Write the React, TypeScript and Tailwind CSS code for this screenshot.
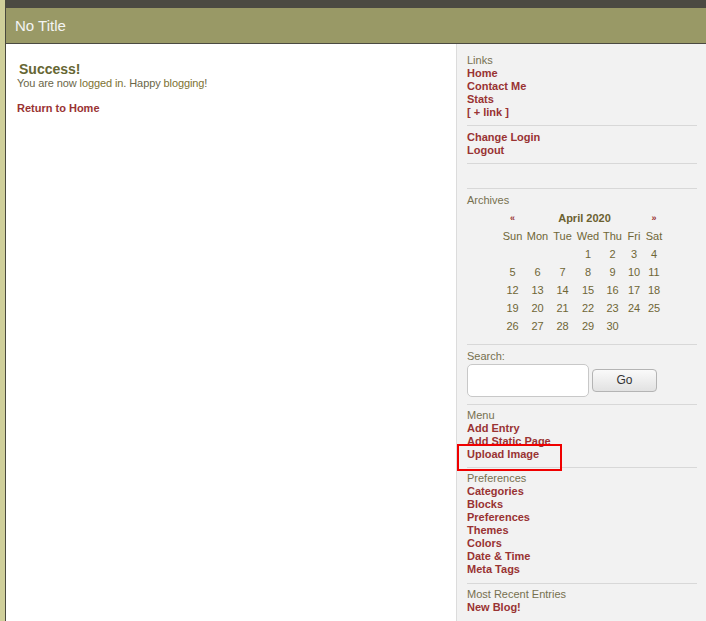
import React from "react";

const F = { fontFamily: '"Liberation Sans", Arial, sans-serif' };

function Hr({ mt = "mt-[6px]", mb = "mb-[4px]" }: { mt?: string; mb?: string }) {
  return <div className={`${mt} ${mb} h-px bg-[#d8d8d8]`} />;
}

function L({ children }: { children: React.ReactNode }) {
  return <div className="h-[13px] font-bold text-[#993333] whitespace-nowrap">{children}</div>;
}

function H({ children }: { children: React.ReactNode }) {
  return <div className="h-[13px] text-[#76704f] whitespace-nowrap">{children}</div>;
}

const cols = ["w-[25px]", "w-[25px]", "w-[25px]", "w-[26px]", "w-[23px]", "w-[20px]", "w-[20px]"];
const heads = ["Sun", "Mon", "Tue", "Wed", "Thu", "Fri", "Sat"];
const weeks: (number | null)[][] = [
  [null, null, null, 1, 2, 3, 4],
  [5, 6, 7, 8, 9, 10, 11],
  [12, 13, 14, 15, 16, 17, 18],
  [19, 20, 21, 22, 23, 24, 25],
  [26, 27, 28, 29, 30, null, null],
];

function Calendar() {
  return (
    <div className="flex justify-center mt-[2px]">
      <div className="flex flex-col text-[#6f6636]">
        <div className="flex h-[18px] items-center">
          <div className="w-[25px] text-center text-[#993333] font-bold text-[9px]">«</div>
          <div className="w-[119px] text-center font-bold text-[#6b6130]">April 2020</div>
          <div className="w-[20px] text-center text-[#993333] font-bold text-[9px]">»</div>
        </div>
        <div className="flex h-[18px] items-center">
          {heads.map((h, i) => (
            <div key={h} className={`${cols[i]} text-center`}>{h}</div>
          ))}
        </div>
        {weeks.map((w, wi) => (
          <div key={wi} className="flex h-[18px] items-center">
            {w.map((d, i) => (
              <div key={i} className={`${cols[i]} text-center`}>{d ?? ""}</div>
            ))}
          </div>
        ))}
      </div>
    </div>
  );
}

export default function App() {
  return (
    <div style={F} className="flex min-h-[621px] bg-[#cccc99]">
      <div className="w-[5px] shrink-0 bg-[#cfcf9a]" />
      <div className="flex-1 flex flex-col border-l border-[#4a4a3e] bg-white">
        <div className="h-[8px] bg-[#4b4a42]" />
        <div className="h-[36px] bg-[#999966] border-b border-[#4b4a42] flex items-center pl-[9px] pt-[2px] text-[15px] text-[#f4f4f4]">
          No Title
        </div>
        <div className="flex flex-1">
          <div className="w-[450px] shrink-0 pl-[11px] pt-[17px] text-[11px]">
            <div className="pl-[2px] text-[14px] font-bold text-[#666633] leading-[16px]">Success!</div>
            <div className="leading-[13px] text-[#6a6648] tracking-[-0.1px]">
              You are now <span className="text-[#7d7232]">logged in</span>. Happy{" "}
              <span className="text-[#7d7232]">blogging</span>!
            </div>
            <div className="mt-[12px] leading-[13px] font-bold text-[#993333]">Return to Home</div>
          </div>
          <div className="flex-1 border-l border-[#dcdcdc] bg-[#f2f2f2] pl-[10px] pr-[9px] pt-[10px] text-[11px] leading-[13px]">
            <H>Links</H>
            <L>Home</L>
            <L>Contact Me</L>
            <L>Stats</L>
            <L>[ + link ]</L>
            <Hr mt="mt-[6px]" mb="mb-[5px]" />
            <L>Change Login</L>
            <L>Logout</L>
            <Hr mt="mt-[6px]" mb="mb-[24px]" />
            <Hr mt="mt-0" mb="mb-[5px]" />
            <H>Archives</H>
            <Calendar />
            <Hr mt="mt-[9px]" mb="mb-[5px]" />
            <H>Search:</H>
            <div className="flex items-center mt-px gap-[3px]">
              <div className="w-[122px] h-[33px] bg-white border border-[#c8c8c8] rounded-[5px]" />
              <div className="w-[65px] h-[23px] border border-[#b4b4b4] rounded-[4px] bg-gradient-to-b from-[#fafafa] to-[#e2e2e2] flex items-center justify-center text-[12px] text-[#333]">
                Go
              </div>
            </div>
            <Hr mt="mt-[7px]" mb="mb-[4px]" />
            <H>Menu</H>
            <L>Add Entry</L>
            <L>Add Static Page</L>
            <div className="relative">
              <L>Upload Image</L>
              <div className="absolute left-[-10px] top-[-4px] w-[105px] h-[27px] border-2 border-[#f00000]" />
            </div>
            <Hr mt="mt-[6px]" mb="mb-[4px]" />
            <H>Preferences</H>
            <L>Categories</L>
            <L>Blocks</L>
            <L>Preferences</L>
            <L>Themes</L>
            <L>Colors</L>
            <L>Date &amp; Time</L>
            <L>Meta Tags</L>
            <Hr mt="mt-[7px]" mb="mb-[4px]" />
            <H>Most Recent Entries</H>
            <L>New Blog!</L>
          </div>
        </div>
      </div>
    </div>
  );
}
